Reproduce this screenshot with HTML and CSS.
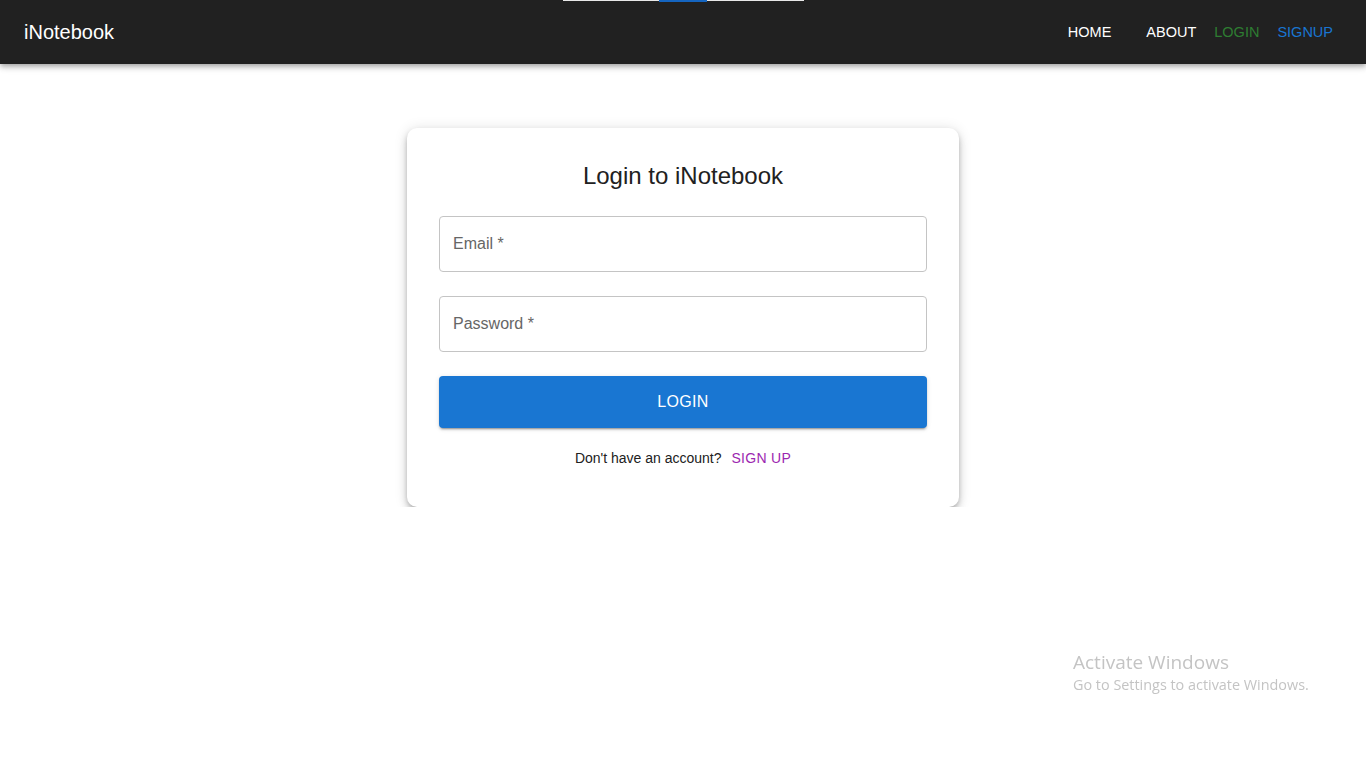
FILE: index.html
```html
<!DOCTYPE html>
<html lang="en">
<head>
<meta charset="utf-8">
<title>iNotebook</title>
<link rel="stylesheet" href="styles.css">
</head>
<body>
<div class="loader"><span class="loader-fill"></span></div>
<header class="appbar">
  <div class="brand">iNotebook</div>
  <nav class="nav">
    <a class="nav-link home">HOME</a>
    <a class="nav-link about">ABOUT</a>
    <a class="nav-link login">LOGIN</a>
    <a class="nav-link signup">SIGNUP</a>
  </nav>
</header>
<main class="main">
  <section class="card">
    <h1 class="title">Login to iNotebook</h1>
    <div class="field"><span class="label">Email *</span></div>
    <div class="field"><span class="label">Password *</span></div>
    <button class="btn">LOGIN</button>
    <p class="foot">Don't have an account? <a class="foot-link">SIGN UP</a></p>
  </section>
</main>
<div class="watermark">
  <div class="wm-title">Activate Windows</div>
  <div class="wm-sub">Go to Settings to activate Windows.</div>
</div>
</body>
</html>
```
FILE: styles.css
```css
html, body {
  margin: 0;
  padding: 0;
  background: #ffffff;
  font-family: "Liberation Sans", Arial, sans-serif;
}
.loader {
  position: absolute;
  top: 0;
  left: 563px;
  width: 241px;
  height: 1px;
  background: #e8e8e8;
  z-index: 10;
}
.loader-fill {
  position: absolute;
  left: 96px;
  top: 0;
  width: 48px;
  height: 2px;
  background: #1565c0;
}
.appbar {
  height: 64px;
  background: #212121;
  display: flex;
  align-items: center;
  justify-content: space-between;
  padding: 0 24px;
  box-shadow: 0 2px 4px -1px rgba(0,0,0,0.2), 0 4px 5px 0 rgba(0,0,0,0.14), 0 1px 10px 0 rgba(0,0,0,0.12);
  position: relative;
}
.brand {
  color: #ffffff;
  font-size: 20px;
  letter-spacing: 0;
}
.nav {
  display: flex;
  align-items: center;
  margin-right: 9px;
}
.nav-link {
  font-size: 14.5px;
  color: #ffffff;
  text-decoration: none;
}
.home { margin-right: 35px; }
.about { margin-right: 18px; }
.login { color: #2e7d32; margin-right: 18px; }
.signup { color: #1976d2; }
.main {
  display: flex;
  justify-content: center;
  padding-top: 64px;
}
.card {
  width: 488px;
  padding: 32px 32px 39px;
  background: #fff;
  border-radius: 10px;
  box-shadow: 0 3px 5px -1px rgba(0,0,0,0.2), 0 5px 8px 0 rgba(0,0,0,0.14), 0 1px 14px 0 rgba(0,0,0,0.12);
  display: flex;
  flex-direction: column;
}
.title {
  margin: 0 0 24px;
  font-weight: 400;
  font-size: 24px;
  line-height: 32px;
  text-align: center;
  color: #212121;
}
.field {
  height: 54px;
  border: 1px solid #c4c4c4;
  border-radius: 4px;
  display: flex;
  align-items: center;
  padding: 0 13px;
  margin-bottom: 24px;
}
.label {
  font-size: 16px;
  color: #666666;
}
.btn {
  height: 52px;
  border: none;
  border-radius: 4px;
  background: #1976d2;
  color: #ffffff;
  font-family: "Liberation Sans", Arial, sans-serif;
  font-size: 16px;
  letter-spacing: 0.3px;
  box-shadow: 0 3px 1px -2px rgba(0,0,0,0.2), 0 2px 2px 0 rgba(0,0,0,0.14), 0 1px 5px 0 rgba(0,0,0,0.12);
  margin: 0 0 20px;
  padding: 0;
}
.foot {
  margin: 0;
  font-size: 14px;
  line-height: 20px;
  text-align: center;
  color: #212121;
}
.foot-link {
  color: #9c27b0;
  margin-left: 6px;
  letter-spacing: 0.3px;
}
.watermark {
  position: fixed;
  left: 1073px;
  top: 650px;
  font-family: "Open Sans", "Noto Sans", sans-serif;
  color: #c4c4c4;
}
.wm-title {
  font-size: 19px;
  line-height: 24px;
}
.wm-sub {
  font-size: 14.4px;
  line-height: 21px;
}
```
